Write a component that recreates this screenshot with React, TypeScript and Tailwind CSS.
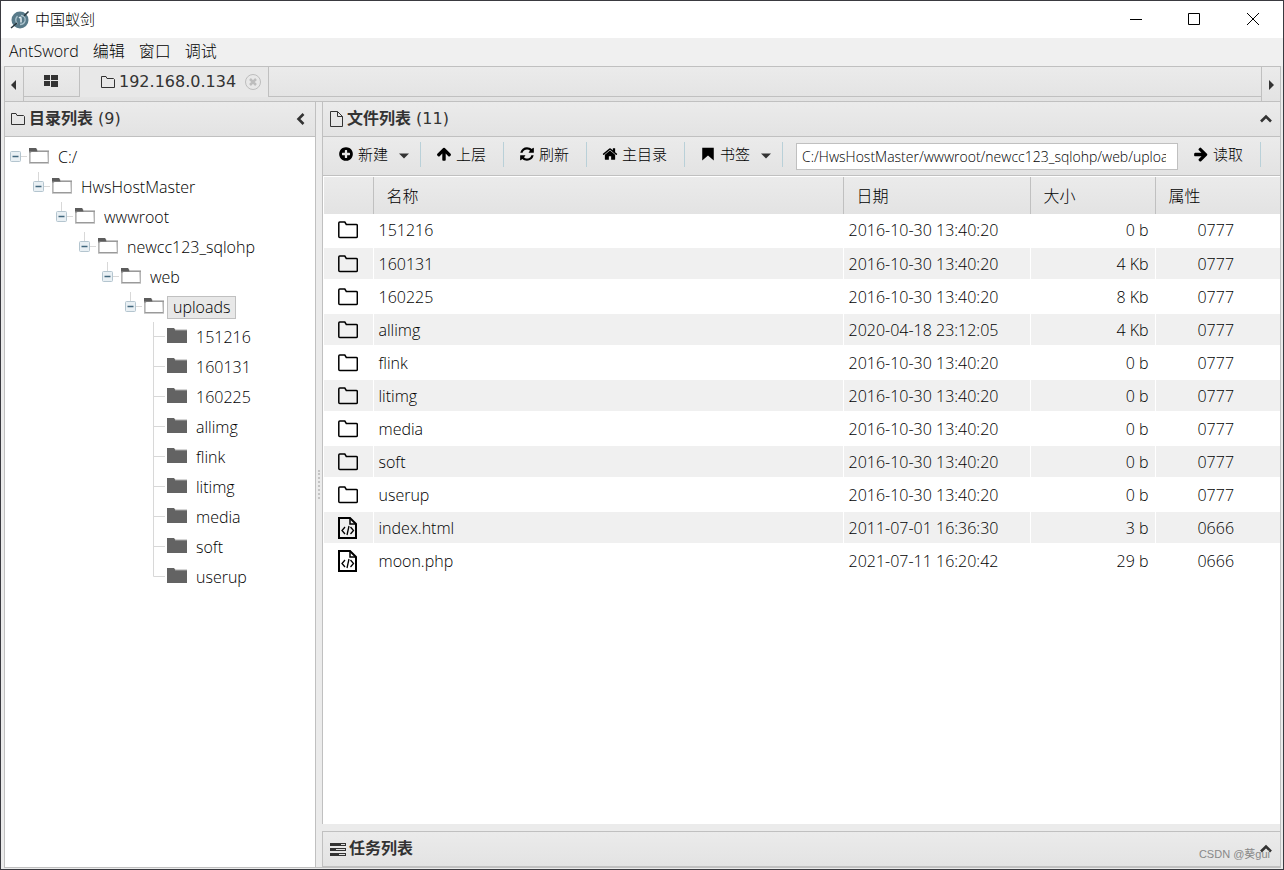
import type { ReactNode } from "react";

const LATIN = "font-['Open_Sans','Noto_Sans_CJK_SC',sans-serif]";
const WIDE = "font-['DejaVu_Sans','Noto_Sans_CJK_SC',sans-serif]";
const GLOSS = "bg-linear-to-b from-[#ebebeb] to-[#e3e3e3]";

const GLYPHS = {
  plus: "M1344 960v-128q0-26-19-45t-45-19h-256v-256q0-26-19-45t-45-19h-128q-26 0-45 19t-19 45v256h-256q-26 0-45 19t-19 45v128q0 26 19 45t45 19h256v256q0 26 19 45t45 19h128q26 0 45-19t19-45v-256h256q26 0 45-19t19-45zm320-64q0 209-103 385.5t-279.5 279.5-385.5 103-385.5-103-279.5-279.5-103-385.5 103-385.5 279.5-279.5 385.5-103 385.5 103 279.5 279.5 103 385.5z",
  up: "M1675 971q0 51-37 90l-75 75q-38 38-91 38-54 0-90-38l-294-293v704q0 52-37.5 84.5t-90.5 32.5h-128q-53 0-90.5-32.5t-37.5-84.5v-704l-294 293q-36 38-90 38t-90-38l-75-75q-38-38-38-90 0-53 38-91l651-651q35-37 90-37 54 0 91 37l651 651q37 39 37 91z",
  right: "M1600 960q0 54-37 91l-651 651q-39 37-91 37-51 0-90-37l-75-75q-38-38-38-91t38-91l293-293h-704q-52 0-84.5-37.5t-32.5-90.5v-128q0-53 32.5-90.5t84.5-37.5h704l-293-294q-38-36-38-90t38-90l75-75q38-38 90-38 53 0 91 38l651 651q37 35 37 90z",
  refresh: "M1639 1056q0 5-1 7-64 268-268 434.5t-478 166.5q-146 0-282.5-55t-243.5-157l-129 129q-19 19-45 19t-45-19-19-45v-448q0-26 19-45t45-19h448q26 0 45 19t19 45-19 45l-137 137q71 66 161 102t187 36q134 0 250-65t186-179q11-17 53-117 8-23 30-23h192q13 0 22.5 9.5t9.5 22.5zm25-800v448q0 26-19 45t-45 19h-448q-26 0-45-19t-19-45 19-45l138-138q-148-137-349-137-134 0-250 65t-186 179q-11 17-53 117-8 23-30 23h-199q-13 0-22.5-9.5t-9.5-22.5v-7q65-268 270-434.5t480-166.5q146 0 284 55.5t245 156.5l130-129q19-19 45-19t45 19 19 45z",
  home: "M1472 992v480q0 26-19 45t-45 19h-384v-384h-256v384h-384q-26 0-45-19t-19-45v-480q0-1 .5-3t.5-3l575-474 575 474q1 2 1 6zm223-69l-62 74q-8 9-21 11h-3q-13 0-21-7l-692-577-692 577q-12 8-24 7-13-2-21-11l-62-74q-8-10-7-23.5t11-21.5l719-599q32-26 76-26t76 26l244 204v-195q0-14 9-23t23-9h192q14 0 23 9t9 23v408l219 182q10 8 11 21.5t-7 23.5z",
  bookmark: "M250 200h1292v1430l-646-560-646 560z",
};

function Glyph({ name }: { name: keyof typeof GLYPHS }) {
  return (
    <svg viewBox="0 0 1792 1792" className="size-4 shrink-0" fill="currentColor" aria-hidden>
      <path d={GLYPHS[name]} />
    </svg>
  );
}

function Chevron({ dir }: { dir: "left" | "up" }) {
  return (
    <svg viewBox="0 0 12 12" className="size-3" fill="none" stroke="#333" strokeWidth="2.6" aria-hidden>
      <path d={dir === "left" ? "M8.5 1L3.5 6l5 5" : "M1 8.5l5-5 5 5"} />
    </svg>
  );
}

function Caret() {
  return (
    <svg viewBox="0 0 10 6" className="mt-[3px] ml-[7px] h-[6px] w-[10px]" aria-hidden>
      <path d="M0 .5h10L5 5.5z" fill="#333" />
    </svg>
  );
}

function FolderOutline() {
  return (
    <svg viewBox="0 0 16 14" className="h-[14px] w-4" fill="none" stroke="#333" aria-hidden>
      <path d="M1.5 1.5h4.5l1 2h6.5l1 1v8h-13z" />
    </svg>
  );
}

function OpenFolder() {
  return (
    <svg viewBox="0 0 20 16" className="h-4 w-5" aria-hidden>
      <path d="M0 0h7l1.5 2H20v13.5H0z" fill="#9a9a9a" />
      <path d="M0 0h7l1.5 3.5H0z" fill="#5c5c5c" />
      <path d="M1.5 5l1-1h16l.3 10H1.5z" fill="#fff" />
      <path d="M8.5 2.5H20" stroke="#c4c4c4" />
      <path d="M.5 5v10M19.5 4v11" stroke="#b4b4b4" />
    </svg>
  );
}

function ClosedFolder() {
  return (
    <svg viewBox="0 0 20 16" className="h-4 w-5" aria-hidden>
      <path d="M0 0h7l1.5 2H20v13H0z" fill="#636363" />
      <path d="M8 2h12" stroke="#aaa" />
    </svg>
  );
}

function Branch({ root }: { root: boolean }) {
  return (
    <svg viewBox="0 0 23 30" className="h-[30px] w-[23px] shrink-0" fill="none" aria-hidden>
      {!root && <path d="M10.5 0v9" stroke="#d8d8d8" />}
      <path d="M16 14.5h6" stroke="#d8d8d8" />
      <rect x="5.5" y="9.5" width="10" height="10" rx="1" fill="#e9f0f4" stroke="#b4c5cf" />
      <path d="M7.5 14.5h6" stroke="#41677d" strokeWidth="1.5" />
    </svg>
  );
}

function Elbow({ last }: { last: boolean }) {
  return (
    <svg viewBox="0 0 23 30" className="h-[30px] w-[23px] shrink-0" fill="none" stroke="#d8d8d8" aria-hidden>
      <path d={last ? "M10.5 0v14.5H22" : "M10.5 0v30M10.5 14.5H22"} />
    </svg>
  );
}

const PATH = ["C:/", "HwsHostMaster", "wwwroot", "newcc123_sqlohp", "web", "uploads"];
const LEAVES = ["151216", "160131", "160225", "allimg", "flink", "litimg", "media", "soft", "userup"];

function TreeNode({ depth }: { depth: number }) {
  const selected = depth === PATH.length - 1;
  return (
    <li>
      <div className="flex h-[30px] items-center">
        <Branch root={depth === 0} />
        <span className="mb-[2px] ml-px">
          <OpenFolder />
        </span>
        <button
          className={`ml-[3px] h-[23px] border px-[5px] leading-[21px] ${
            selected ? "border-[#c0c0c0] bg-[#e8e8e8]" : "border-transparent"
          }`}
        >
          {PATH[depth]}
        </button>
      </div>
      <ul className="pl-[23px]">
        {selected
          ? LEAVES.map((name, i) => (
              <li key={name} className="flex h-[30px] items-center">
                <Elbow last={i === LEAVES.length - 1} />
                <span className="mb-[2px] ml-px">
                  <ClosedFolder />
                </span>
                <button className="ml-[3px] border border-transparent px-[5px] leading-[21px]">{name}</button>
              </li>
            ))
          : <TreeNode depth={depth + 1} />}
      </ul>
    </li>
  );
}

const D = "2016-10-30 13:40:20";
const FILES = [
  ["151216", D, "0 b", "0777"],
  ["160131", D, "4 Kb", "0777"],
  ["160225", D, "8 Kb", "0777"],
  ["allimg", "2020-04-18 23:12:05", "4 Kb", "0777"],
  ["flink", D, "0 b", "0777"],
  ["litimg", D, "0 b", "0777"],
  ["media", D, "0 b", "0777"],
  ["soft", D, "0 b", "0777"],
  ["userup", D, "0 b", "0777"],
  ["index.html", "2011-07-01 16:36:30", "3 b", "0666"],
  ["moon.php", "2021-07-11 16:20:42", "29 b", "0666"],
];

function FileIcon({ code }: { code: boolean }) {
  return code ? (
    <svg viewBox="0 0 20 22" className="mx-auto h-[22px] w-5" fill="none" stroke="#000" strokeWidth="2" aria-hidden>
      <path d="M1 1h11l6 6v14H1z" />
      <path d="M12 1v6h6" strokeWidth="1.5" />
      <path d="M7 10l-3 3.5L7 17M12.5 10l3 3.5-3 3.5M11 9l-2 9" strokeWidth="1.3" />
    </svg>
  ) : (
    <svg viewBox="0 0 20 18" className="mx-auto h-[18px] w-5" fill="none" stroke="#000" strokeWidth="1.5" aria-hidden>
      <path d="M.8 2q0-1 1-1h5l1.5 2.500h10q1 0 1 1v11q0 1-1 1H1.800q-1 0-1-1z" />
    </svg>
  );
}

function PanelTitle({ icon, title, count, dir }: { icon: ReactNode; title: string; count?: string; dir: "left" | "up" }) {
  return (
    <header className={`flex h-[35px] shrink-0 items-center border-b border-[#c0c0c0] pr-2 pl-[5px] text-[#333] ${GLOSS}`}>
      {icon}
      <h2 className={`ml-[3px] flex-1 text-base leading-6 ${WIDE}`}>
        <span className="font-bold">{title}</span>
        {count && ` ${count}`}
      </h2>
      <button aria-label={`折叠${title}`}>
        <Chevron dir={dir} />
      </button>
    </header>
  );
}

function ToolButton({ icon, label, menu }: { icon: keyof typeof GLYPHS; label: string; menu?: boolean }) {
  return (
    <>
      <button
        className={`mb-1 flex shrink-0 items-center gap-1 pl-[15px] text-[15px] leading-6 ${menu ? "pr-[11px]" : "pr-[17px]"}`}
      >
        <Glyph name={icon} />
        {label}
        {menu && <Caret />}
      </button>
      <span className="mb-[3px] h-[25px] w-px shrink-0 bg-[#b9d0d8]" />
    </>
  );
}

function FilePanel() {
  return (
    <section className="flex min-h-0 flex-1 flex-col border-l border-[#c0c0c0] bg-white">
      <PanelTitle
        dir="up"
        title="文件列表"
        count="(11)"
        icon={
          <svg viewBox="0 0 15 16" className="ml-px h-4 w-[15px]" fill="none" stroke="#333" aria-hidden>
            <path d="M1.5 .5h7l5 5v10h-12zM8.5 .5v5h5" />
          </svg>
        }
      />
      <div className={`flex h-[39px] shrink-0 items-center border-b border-[#c0c0c0] pr-[19px] font-light ${GLOSS}`}>
        <ToolButton icon="plus" label="新建" menu />
        <ToolButton icon="up" label="上层" />
        <ToolButton icon="refresh" label="刷新" />
        <ToolButton icon="home" label="主目录" />
        <ToolButton icon="bookmark" label="书签" menu />
        <input
          aria-label="路径"
          defaultValue="C:/HwsHostMaster/wwwroot/newcc123_sqlohp/web/uploads/"
          className="ml-[13px] h-[27px] min-w-0 flex-1 border border-[#c0c0c0] bg-white pr-[11px] pl-[5px] text-[14px]"
        />
        <ToolButton icon="right" label="读取" />
      </div>
      <table className="mt-px ml-px w-[calc(100%-1px)] table-fixed border-collapse text-base font-light">
        <colgroup>
          <col className="w-[49px]" />
          <col />
          <col className="w-[187px]" />
          <col className="w-[125px]" />
          <col className="w-[125px]" />
        </colgroup>
        <thead>
          <tr className={`h-[37px] ${GLOSS}`}>
            <th />
            {["名称", "日期", "大小", "属性"].map((label) => (
              <th key={label} className="border-l border-[#c0c0c0] pr-3 pl-[13px] text-left font-light">
                {label}
              </th>
            ))}
          </tr>
        </thead>
        <tbody>
          {FILES.map(([name, date, size, mode], i) => (
            <tr key={name} className={`h-[33px] border-b-2 border-white ${i % 2 ? "bg-[#f0f0f0]" : ""}`}>
              <td>
                <FileIcon code={name.includes(".")} />
              </td>
              <td className="border-l border-white pl-[5px]">{name}</td>
              <td className="border-l border-white pl-[5px]">{date}</td>
              <td className="border-l border-white pr-[6px] text-right">{size}</td>
              <td className="border-l border-white pr-1 text-center">{mode}</td>
            </tr>
          ))}
        </tbody>
      </table>
    </section>
  );
}

function TitleBar() {
  return (
    <header className="flex h-[37px] shrink-0 items-center bg-white pl-[9px] text-[15px]">
      <svg viewBox="0 0 20 20" className="size-5" aria-hidden>
        <circle cx="10" cy="10" r="8.5" fill="#587a89" />
        <path d="M7.5 6q-3.5 4 0 8M11 5.5q5 .5 4 5.5-1 3.5-5 3.5" stroke="#a9c1cb" strokeWidth="1.3" fill="none" />
        <path d="M9 8q2-1.5 2 .5v4" stroke="#e3edf1" strokeWidth="1.5" fill="none" />
        <path d="M1 18l6-5M14 6l4.5-4.5" stroke="#26343b" strokeWidth="1.5" />
      </svg>
      <h1 className="ml-[5px] flex-1 pb-px font-light">中国蚁剑</h1>
      <button aria-label="最小化" className="flex w-[58px] justify-center pb-[2px]">
        <svg viewBox="0 0 12 12" className="size-3"><path d="M0 6.5h12" stroke="#000" /></svg>
      </button>
      <button aria-label="最大化" className="flex w-[58px] justify-center pb-[2px]">
        <svg viewBox="0 0 12 12" className="size-3"><path d="M.5 .5h11v11H.5z" stroke="#000" fill="none" /></svg>
      </button>
      <button aria-label="关闭" className="flex w-[60px] justify-center pb-[2px]">
        <svg viewBox="0 0 12 12" className="size-3"><path d="M0 0l12 12M12 0L0 12" stroke="#000" /></svg>
      </button>
    </header>
  );
}

function TabBar() {
  return (
    <div className={`flex h-[36px] shrink-0 border border-[#c0c0c0] text-[#333] ${GLOSS}`}>
      <button aria-label="向左滚动" className="flex w-[19px] items-center justify-center border-r border-[#c0c0c0] pt-[2px] pr-px">
        <svg viewBox="0 0 5 10" className="h-[10px] w-[5px]"><path d="M5 0v10L0 5z" fill="#333" /></svg>
      </button>
      <div className="flex h-[30px] flex-1 border-b border-[#c0c0c0]">
        <button aria-label="主页" className="flex w-14 items-center justify-center border-r border-[#c0c0c0] pr-px pb-px">
          <svg viewBox="0 0 14 12" className="h-3 w-[14px]" fill="#333">
            <path d="M0 0h6v5H0zM7 0h7v5H7zM0 6h6v5H0zM7 6h7v6H7z" />
          </svg>
        </button>
        <div className="flex h-[30px] w-[189px] items-center border-r border-[#c0c0c0] bg-[#e8e8e8] pl-5">
          <FolderOutline />
          <button className={`ml-[3px] text-base ${WIDE}`}>192.168.0.134</button>
          <button aria-label="关闭标签" className="ml-[9px]">
            <svg viewBox="0 0 16 16" className="size-4" fill="none" stroke="#bdbdbd">
              <circle cx="8" cy="8" r="7.5" />
              <path d="M5 5l6 6M11 5l-6 6" strokeWidth="2.5" />
            </svg>
          </button>
        </div>
      </div>
      <button aria-label="向右滚动" className="flex w-[19px] items-center justify-center border-l border-[#c0c0c0] pt-[2px]">
        <svg viewBox="0 0 5 10" className="h-[10px] w-[5px]"><path d="M0 0v10l5-5z" fill="#333" /></svg>
      </button>
    </div>
  );
}

export default function App() {
  return (
    <div className={`flex h-screen flex-col border border-[#3a3a40] bg-[#ebebeb] text-black ${LATIN}`}>
      <TitleBar />
      <nav className="flex h-7 shrink-0 items-center gap-[14px] bg-[#f0f0f0] pb-[2px] pl-2 text-base">
        {["AntSword", "编辑", "窗口", "调试"].map((label) => (
          <button key={label} className="font-light">{label}</button>
        ))}
      </nav>
      <div className="mr-[2px] mb-px ml-[3px] flex min-h-0 flex-1 flex-col">
        <TabBar />
        <div className="flex min-h-0 flex-1 border-r border-b border-[#c0c0c0]">
          <aside className="flex w-[312px] shrink-0 flex-col border-x border-[#c0c0c0] bg-white">
            <PanelTitle dir="left" title="目录列表" count="(9)" icon={<FolderOutline />} />
            <ul className="pt-[5px] text-base font-light">
              <TreeNode depth={0} />
            </ul>
          </aside>
          <div className="flex w-[6px] shrink-0 items-center justify-center">
            <span className="h-[29px] border-l-2 border-dotted border-[#c4c4c4]" />
          </div>
          <main className="relative flex min-w-0 flex-1 flex-col">
            <FilePanel />
            <section className="mt-[7px] border-t border-l border-[#c0c0c0]">
              <PanelTitle
                dir="up"
                title="任务列表"
                icon={
                  <svg viewBox="0 0 16 13" className="ml-[2px] h-[13px] w-4" fill="none" stroke="#333" aria-hidden>
                    <path d="M0 1.5h16M0 6.5h16M0 11.5h16" strokeWidth="3" />
                    <path d="M11 1.5h4M6 6.5h9M9 11.5h6" stroke="#ddd" />
                  </svg>
                }
              />
            </section>
            <span className="absolute right-[10px] bottom-[5px] text-[11px] leading-4 text-[#888] font-['Liberation_Sans','Noto_Sans_CJK_SC',sans-serif]">
              CSDN @葵gui
            </span>
          </main>
        </div>
      </div>
    </div>
  );
}
